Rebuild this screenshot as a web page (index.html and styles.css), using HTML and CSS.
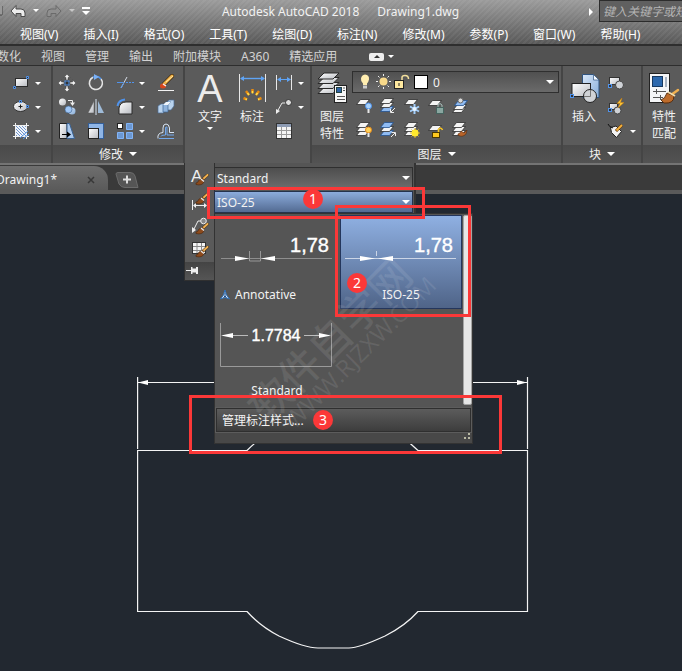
FILE: index.html
```html
<!DOCTYPE html>
<html lang="zh-CN">
<head>
    <meta charset="UTF-8">
    <meta name="viewport" content="width=device-width, initial-scale=1.0">
    <title>Autodesk AutoCAD 2018 - Drawing1.dwg</title>
    <link rel="stylesheet" href="styles.css">
</head>
<body>
    <!-- shared shapes -->
    <svg class="defs" width="0" height="0" aria-hidden="true">
        <defs>
            <linearGradient id="metal" x1="0" y1="0" x2="1" y2="1">
                <stop offset="0" stop-color="#ffffff"/>
                <stop offset="1" stop-color="#b9bcc2"/>
            </linearGradient>
            <linearGradient id="blue" x1="0" y1="0" x2="1" y2="1">
                <stop offset="0" stop-color="#d9e7f8"/>
                <stop offset="1" stop-color="#86add9"/>
            </linearGradient>
            <pattern id="hatch" width="3" height="3" patternUnits="userSpaceOnUse">
                <rect width="3" height="3" fill="#f2f5fa"/>
                <path d="M0 0L3 3" stroke="#6f94cc"/>
            </pattern>
            <symbol id="brush" viewBox="0 0 14 12">
                <path d="M7 6L12.500 1" stroke="#3a2a18" stroke-width="3" stroke-linecap="round"/>
                <path d="M7 6L12.500 1" stroke="#f0b050" stroke-width="2" stroke-linecap="round"/>
                <path d="M1 9Q3 9 4 6L8 4.500L9 8Q7 12 1 10.500Z" fill="#8c4a1c" stroke="#4a260c" stroke-width=".6"/>
                <path d="M6 5L9 7.500" stroke="#e8e8e8" stroke-width="1.400"/>
            </symbol>
            <symbol id="sheet" viewBox="0 0 14 6">
                <path d="M4.500 .5H13.500L9.500 5.500H.5Z" fill="#f4f4f4" stroke="#2c2c2c" stroke-width=".8"/>
            </symbol>
            <symbol id="sheet-blue" viewBox="0 0 14 6">
                <path d="M4.500 .5H13.500L9.500 5.500H.5Z" fill="#8fbbf2" stroke="#23508c" stroke-width=".8"/>
            </symbol>
        </defs>
    </svg>

    <header class="app-header">
        <div class="titlebar">
            <div class="quick-access">
                <svg width="92" height="24" viewBox="0 0 92 24">
                    <path d="M0 6V15H2V6" fill="#eee" stroke="#444"/>
                    <path d="M11 11L16 5.500V9H21Q25 9 25 13V16.500H21V13.500H16V16.500Z" fill="#ececec" stroke="#4a4a4a"/>
                    <path d="M33 9H39L36 12Z" fill="#fff"/>
                    <path d="M61 11L56 5.500V9H51Q47 9 47 13V16.500H51V13.500H56V16.500Z" fill="#8f8f8f" stroke="#6a6a6a"/>
                    <path d="M69 9H75L72 12Z" fill="#c8c8c8"/>
                    <path d="M82 7H90V9H82ZM82 11H90L86 15Z" fill="#fff"/>
                </svg>
            </div>
            <h1 class="title"><span>Autodesk AutoCAD 2018</span><span>Drawing1.dwg</span></h1>
            <span class="play"></span>
            <input class="search" type="text" placeholder="键入关键字或短语" aria-label="键入关键字或短语">
        </div>
        <nav class="menubar">
            <a href="#">视图(V)</a>
            <a href="#">插入(I)</a>
            <a href="#">格式(O)</a>
            <a href="#">工具(T)</a>
            <a href="#">绘图(D)</a>
            <a href="#">标注(N)</a>
            <a href="#">修改(M)</a>
            <a href="#">参数(P)</a>
            <a href="#">窗口(W)</a>
            <a href="#">帮助(H)</a>
        </nav>
    </header>

    <nav class="ribbon-tabs">
        <a href="#">参数化</a>
        <a href="#">视图</a>
        <a href="#">管理</a>
        <a href="#">输出</a>
        <a href="#">附加模块</a>
        <a href="#">A360</a>
        <a href="#">精选应用</a>
        <button class="minimize" aria-label="最小化"><i class="up"></i></button>
        <i class="caret"></i>
    </nav>

    <section class="ribbon">
        <div class="panel panel-draw">
            <div class="tools">
                <div class="tool-col">
                    <button class="tool"><svg viewBox="0 0 18 18"><rect x="3.500" y="4.500" width="12" height="8" fill="url(#metal)" stroke="#2b2b2b"/><path d="M14.500 2.500h2v2h-2zM1.500 12.500h2v2h-2z" fill="#333" stroke="#4f93ec"/></svg><i class="caret"></i></button>
                    <button class="tool"><svg viewBox="0 0 18 18"><ellipse cx="8.500" cy="8.500" rx="7" ry="5" fill="url(#metal)" stroke="#333"/><path d="M6.500 8.500h4M8.500 6.500v4" stroke="#222"/><path d="M7.500 2.500h2v2h-2zM14.500 7.500h2v2h-2z" fill="#333" stroke="#4f93ec"/></svg><i class="caret"></i></button>
                    <button class="tool"><svg viewBox="0 0 18 18"><rect x="4" y="4" width="10" height="10" fill="url(#hatch)"/><path d="M1 3.500H17M1 14.500H17M3.500 1V17M14.500 1V17" stroke="#f0f0f0"/><path d="M8 16L16 9M11 17L17 12" stroke="#4f93ec"/></svg><i class="caret"></i></button>
                </div>
            </div>
            <div class="panel-title"></div>
        </div>

        <div class="panel panel-modify">
            <div class="tools tool-grid">
                <button class="tool"><svg viewBox="0 0 18 18"><rect x="7" y="7" width="4" height="4" fill="#333" stroke="#4f93ec"/><path d="M9 0L12 3.500H10V6H8V3.500H6ZM9 18L12 14.500H10V12H8V14.500H6ZM0 9L3.500 6V8H6V10H3.500V12ZM18 9L14.500 6V8H12V10H14.500V12Z" fill="#f2f2f2" stroke="#333" stroke-width=".5"/></svg></button>
                <button class="tool"><svg viewBox="0 0 18 18"><path d="M6 3.200A6.500 6.500 0 1 0 14 5" fill="none" stroke="#e4e4e4" stroke-width="1.600"/><path d="M6 3.200A6.500 6.500 0 0 1 14 5" fill="none" stroke="#4f93ec" stroke-width="1.600"/><path d="M7 0L12 3L7 6Z" fill="#7db0f2"/></svg></button>
                <button class="tool"><svg viewBox="0 0 18 18"><path d="M1 8.500H7" stroke="#4f93ec"/><path d="M10 8.500H18" stroke="#4f93ec" stroke-dasharray="2 1"/><path d="M5 14L11 3" stroke="#d5dce6"/><path d="M5 14L8 8.500" stroke="#4f93ec"/></svg><i class="caret"></i></button>
                <button class="tool"><svg viewBox="0 0 18 18"><path d="M7 10L15 2" stroke="#3a2408" stroke-width="4" stroke-linecap="round"/><path d="M7 10L15 2" stroke="#f2b44a" stroke-width="3" stroke-linecap="round"/><path d="M9 8L16 2" stroke="#ffe6a8"/><ellipse cx="6" cy="12" rx="3" ry="2.500" fill="#d8451c"/><path d="M6 10L9 12" stroke="#eee" stroke-width="1.500"/><path d="M1 16.500H17" stroke="#f2f2f2"/></svg></button>

                <button class="tool"><svg viewBox="0 0 18 18"><circle cx="4.500" cy="4" r="3.500" fill="url(#metal)"/><circle cx="14" cy="13" r="3.500" fill="url(#blue)"/><circle cx="10.500" cy="11.500" r="3.500" fill="#9fc6f5" stroke="#3a5f8c" stroke-width=".6"/><path d="M10 2.500H14.500V5" fill="none" stroke="#eee"/><path d="M12 4.500H17L14.500 8Z" fill="#eee"/></svg></button>
                <button class="tool"><svg viewBox="0 0 18 18"><path d="M7 3V15H1Z" fill="url(#metal)" stroke="#555" stroke-width=".5"/><path d="M11 3V15H17Z" fill="#9fbbd8"/><path d="M9 1V17" stroke="#dce8f5"/></svg></button>
                <button class="tool"><svg viewBox="0 0 18 18"><path d="M3 16V10Q4 4 10 4H16V16Z" fill="url(#metal)" stroke="#2b2b2b"/><path d="M1.500 8Q2.500 2 9 1.500" fill="none" stroke="#4f93ec" stroke-width="2"/></svg><i class="caret"></i></button>
                <button class="tool"><svg viewBox="0 0 18 18"><path d="M1 8L4 6H8V13L6 15H1ZM9 5L12 2H17V8L14 12H9Z" fill="#b9d3ee" stroke="#4a6c94" stroke-width=".7"/><path d="M6 7L9 4H14L11 7V14H6Z" fill="#8fb3dc" stroke="#3e6594" stroke-width=".7"/><path d="M6 7L9 4H14L11 7Z" fill="#f0f5fb"/></svg></button>

                <button class="tool"><svg viewBox="0 0 18 18"><path d="M1.500 1.500H9V16.500H1.500Z" fill="url(#metal)" stroke="#222"/><path d="M9 1.500H11.500L16.500 16.500H9Z" fill="#aac8ec" stroke="#3b6292"/><path d="M4 12.500H11" stroke="#000"/><path d="M9 9.500L13 12.500L9 15.500Z" fill="#000"/></svg></button>
                <button class="tool"><svg viewBox="0 0 18 18"><rect x="1.500" y="1.500" width="15" height="15" fill="#8fb5e6" stroke="#355f98"/><rect x="1.500" y="6.500" width="10" height="10" fill="url(#metal)" stroke="#222"/></svg></button>
                <button class="tool"><svg viewBox="0 0 18 18"><rect x="1.500" y="1.500" width="5" height="5" fill="#fff" stroke="#222"/><path d="M10.500 1.500h6v6h-6zM1.500 10.500h6v6h-6zM10.500 10.500h6v6h-6z" fill="#6c98d2" stroke="#82b5f8"/></svg><i class="caret"></i></button>
                <button class="tool"><svg viewBox="0 0 18 18"><path d="M1 16.500Q0 11 6 10.500V6Q6 2 9 2Q12 2 12.500 6V10.500H17" fill="none" stroke="#d8e5f5"/><path d="M4 14.500Q3.500 13 8.500 13V6Q8.500 4.500 10 5V13H17M2 16.500H17" fill="none" stroke="#73a8ec"/></svg></button>
            </div>
            <div class="panel-title">修改<i class="caret caret-lg"></i></div>
        </div>

        <div class="panel panel-annotation">
            <div class="tools">
                <button class="tool-big"><span class="big-icon letter">A</span>文字<i class="caret"></i></button>
                <button class="tool-big">
                    <svg class="big-icon" viewBox="0 0 32 36"><path d="M3.500 2V30M29.500 2V30" stroke="#e8e8e8"/><path d="M5 6.500H28" stroke="#5fa4f5" stroke-width="1.400"/><path d="M4 6.500L8 4V9ZM29 6.500L25 4V9Z" fill="#5fa4f5"/><g stroke="#e88a10" stroke-width="2.500"><path d="M16.500 17V21M10 19L13 23M23 19L20 23M7.500 26L11 27.500M25.500 26L22 27.500"/></g><g stroke="#ffe14a" stroke-width="1.500"><path d="M16.500 19V21.500M11.500 21L13 23M21.500 21L20 23M9.500 27L11 27.500M23.500 27L22 27.500"/></g></svg>
                    标注
                </button>
                <div class="tool-col">
                    <button class="tool"><svg viewBox="0 0 18 18"><path d="M1.500 1V16M16.500 1V16" stroke="#e8e8e8"/><path d="M3 5.500H15" stroke="#5fa4f5"/><path d="M2 5.500L6 3V8ZM16 5.500L12 3V8Z" fill="#5fa4f5"/></svg><i class="caret"></i></button>
                    <button class="tool"><svg viewBox="0 0 18 18"><path d="M2 14L7 5H11" fill="none" stroke="#e8e8e8"/><path d="M1 16V11L5 13Z" fill="#eee"/><circle cx="13.500" cy="4.500" r="3" fill="#ddd" stroke="#333"/></svg><i class="caret"></i></button>
                    <button class="tool"><svg viewBox="0 0 18 18"><rect x="1.500" y="1.500" width="15" height="15" fill="#f4f4f4" stroke="#333"/><path d="M2 2H16V5H2Z" fill="#8d9bb3"/><path d="M2 8.500H16M2 12.500H16M6.500 5V16M11.500 5V16" stroke="#999"/></svg></button>
                </div>
            </div>

            <div class="flyout">
                <div class="style-icons">
                    <svg viewBox="0 0 18 18"><text x="0" y="13" class="icon-letter">A</text><use href="#brush" x="4" y="5" width="14" height="12"/></svg>
                    <svg viewBox="0 0 18 18"><path d="M1.500 7V17M16.500 7V17M3 12.500H15" stroke="#eee"/><path d="M2 12.500L5 10V15ZM16 12.500L13 10V15Z" fill="#eee"/><use href="#brush" x="4" y="0" width="14" height="12"/></svg>
                    <svg viewBox="0 0 18 18"><path d="M2 14L7 4H11" fill="none" stroke="#eee"/><path d="M1 16V10L5 13Z" fill="#eee"/><circle cx="12.500" cy="4" r="2.800" fill="#888" stroke="#eee"/><use href="#brush" x="4" y="6" width="14" height="12"/></svg>
                    <svg viewBox="0 0 18 18"><rect x="1.500" y="1.500" width="13" height="11" fill="#f4f4f4" stroke="#333"/><path d="M2 5.500H14M2 9.500H14M6 2V12M10.500 2V12" stroke="#888"/><use href="#brush" x="4" y="5" width="14" height="12"/></svg>
                    <button class="pin" aria-label="固定"><svg viewBox="0 0 18 18"><path d="M1 8.500H7" stroke="#eee"/><path d="M6 5V12H7.500V10.500H11V12H13V5H11V6.500H7.500V5Z" fill="#eee"/></svg></button>
                </div>
                <div class="style-combos">
                    <select class="combo" aria-label="文字样式"><option>Standard</option></select>
                    <select class="combo active" aria-label="标注样式"><option>ISO-25</option></select>
                </div>

                <div class="style-list">
                    <div class="gallery">
                        <button class="style-item annotative">
                            <svg class="preview" viewBox="0 2 118 70"><text x="111" y="38" text-anchor="end" class="dim-text">1,78</text><path d="M3 44.500H114" stroke="#8e8e8e"/><path d="M31.500 37V47H42.500V37" fill="none" stroke="#989898"/><path d="M17 42L31 44.500L17 47ZM57 42L43 44.500L57 47Z" fill="#fff"/></svg>
                            <span><svg class="anno" viewBox="0 0 10 10"><path d="M5 0L6.500 5L9.500 9L5 7.500L.5 9L3.500 5Z" fill="#e8f2ff" stroke="#2d6db5"/><path d="M5 3V6L3.500 7.500M5 6L6.500 7.500" stroke="#1d4f8c" fill="none"/></svg>Annotative</span>
                        </button>
                        <button class="style-item selected">
                            <svg class="preview" viewBox="0 2 118 70"><text x="111" y="38" text-anchor="end" class="dim-text">1,78</text><path d="M3 44.500H114" stroke="#cbd5e6"/><path d="M34.500 37V42" stroke="#cbd5e6"/><path d="M18 42L33 44.500L18 47ZM51 42L36 44.500L51 47Z" fill="#fff"/></svg>
                            <span>ISO-25</span>
                        </button>
                        <button class="style-item">
                            <svg class="preview" viewBox="0 2 118 70"><path d="M2.500 13V56.500H113.500V13" fill="none" stroke="#9a9a9a"/><path d="M5 25.500H30M86 25.500H111" stroke="#bbb"/><path d="M3 25.500L15 23V28ZM113 25.500L101 23V28Z" fill="#fff"/><text x="58" y="31" text-anchor="middle" class="dim-text dim-small">1.7784</text></svg>
                            <span>Standard</span>
                        </button>
                    </div>
                    <div class="scrollbar"></div>
                    <button class="manage">管理标注样式...</button>
                    <div class="grip"><svg width="12" height="8" viewBox="0 0 12 8"><path d="M8 0h2v2h-2zM4 4h2v2h-2zM8 4h2v2h-2z" fill="#b9b9a4"/></svg></div>
                </div>

                <div class="watermark"><b>软件自学网</b><span>WWW.RJZXW.COM</span></div>

                <div class="mark mark-combo"><span class="badge">1</span></div>
                <div class="mark mark-item"><span class="badge">2</span></div>
                <div class="mark mark-manage"><span class="badge">3</span></div>
            </div>
        </div>

        <div class="panel panel-layers">
            <div class="tools">
                <button class="tool-big">
                    <svg class="big-icon" viewBox="0 0 32 36"><g fill="url(#metal)" stroke="#292929"><path d="M8 15.500H23L17 21.500H2Z"/><path d="M8 10.500H23L17 16.500H2Z"/><path d="M8 5.500H23L17 11.500H2Z"/><path d="M8 1H23L17 7H2Z"/></g><rect x="18.500" y="13.500" width="12" height="17" fill="#f7f7f7" stroke="#222"/><rect x="20.500" y="15.500" width="5" height="5" fill="#2f62a5" stroke="#244"/><path d="M27 16H29M27 18.500H29M21 24.500H29M21 27.500H29" stroke="#555"/></svg>
                    图层<br>特性
                </button>
                <div class="layer-side">
                    <div class="combo layer-combo">
                        <svg width="56" height="18" viewBox="0 0 56 18"><path d="M7 1.500Q11.500 2 11 6.500Q10.500 9 9 10.500V12H5V10.500Q2.500 8 3 5.500Q3.500 2 7 1.500Z" fill="#ffedb0"/><path d="M5 12.500H9V15.500H5Z" fill="#ccc"/><circle cx="25.500" cy="8.500" r="4" fill="#f8d98a"/><path d="M25.500 1V3M25.500 14V16M18 8.500H20M31 8.500H33M20 3L21.500 4.500M31 3L29.500 4.500M20 14L21.500 12.500M31 14L29.500 12.500" stroke="#eee"/><rect x="36.500" y="7.500" width="9" height="8" fill="#ffe9a0" stroke="#222"/><path d="M44 7V4.500Q44 2.500 47 2.500Q50.500 2.500 50.500 6" fill="none" stroke="#f3df9c" stroke-width="1.500"/><path d="M41 10V13" stroke="#222"/></svg>
                        <svg class="swatch" viewBox="0 0 14 14"><rect x=".5" y=".5" width="13" height="13" fill="#fff" stroke="#000"/></svg>
                        <select aria-label="图层"><option>0</option></select>
                    </div>
                    <div class="layer-tools">
                        <button class="tool"><svg viewBox="0 0 18 18"><use href="#sheet" x="1" y="2" width="14" height="6"/><circle cx="13.500" cy="9" r="3" fill="#a9d2fb" stroke="#4f93ec"/><path d="M13.500 12V16" stroke="#e8e8e8" stroke-width="2"/></svg></button>
                        <button class="tool"><svg viewBox="0 0 18 18"><use href="#sheet-blue" x="1" y="9" width="14" height="6"/><use href="#sheet" x="1" y="5" width="14" height="6"/><use href="#sheet" x="1" y="1" width="14" height="6"/><path d="M16 11L12 15M11.500 12V15.500H15" fill="none" stroke="#eee"/></svg></button>
                        <button class="tool"><svg viewBox="0 0 18 18"><use href="#sheet" x="1" y="2" width="14" height="6"/><path d="M11.500 7V17M7 9.500L16 14.500M16 9.500L7 14.500" stroke="#a3cffd" stroke-width="2"/><circle cx="11.500" cy="12" r="2" fill="#eaf5ff"/></svg></button>
                        <button class="tool"><svg viewBox="0 0 18 18"><use href="#sheet" x="1" y="3" width="14" height="6"/><rect x="9.500" y="10.500" width="7" height="6" fill="#89a6a0" stroke="#45635e"/><path d="M11 10V8Q13 5 15 8V10" fill="none" stroke="#a8c0bb"/></svg></button>
                        <button class="tool"><svg viewBox="0 0 18 18"><use href="#sheet" x="1" y="10" width="14" height="6"/><use href="#sheet" x="2" y="7" width="14" height="6"/><use href="#sheet-blue" x="3" y="3" width="14" height="6"/><circle cx="9.500" cy="3.500" r="2.500" fill="#ddd" stroke="#666"/></svg></button>
                        <button class="tool"><svg viewBox="0 0 18 18"><use href="#sheet" x="1" y="9" width="14" height="6"/><use href="#sheet" x="1" y="5" width="14" height="6"/><use href="#sheet" x="1" y="1" width="14" height="6"/><circle cx="13.500" cy="9" r="3" fill="#ffd35a" stroke="#e58a1c"/><path d="M13.500 12V16" stroke="#e8e8e8" stroke-width="2"/></svg></button>
                        <button class="tool"><svg viewBox="0 0 18 18"><use href="#sheet-blue" x="1" y="9" width="14" height="6"/><use href="#sheet" x="1" y="5" width="14" height="6"/><use href="#sheet-blue" x="1" y="1" width="14" height="6"/><path d="M12 16L16 12M12.500 11.500H16.500V15" fill="none" stroke="#eee"/></svg></button>
                        <button class="tool"><svg viewBox="0 0 18 18"><use href="#sheet" x="1" y="9" width="14" height="6"/><use href="#sheet" x="1" y="5" width="14" height="6"/><use href="#sheet" x="1" y="1" width="14" height="6"/><path d="M12 7V17M7 12H17M8.500 8.500L15.500 15.500M15.500 8.500L8.500 15.500" stroke="#e5b82c"/><circle cx="12" cy="12" r="3.500" fill="#ffe92e"/></svg></button>
                        <button class="tool"><svg viewBox="0 0 18 18"><use href="#sheet" x="1" y="4" width="14" height="6"/><rect x="5.500" y="11.500" width="7" height="5" fill="#ffc91e" stroke="#4a3800"/><path d="M11.500 11V8.500Q14 5.500 15.500 9" fill="none" stroke="#ffc91e" stroke-width="1.500"/></svg></button>
                        <button class="tool"><svg viewBox="0 0 18 18"><use href="#sheet" x="1" y="9" width="14" height="6"/><use href="#sheet" x="1" y="5" width="14" height="6"/><use href="#sheet" x="1" y="1" width="14" height="6"/><path d="M7 13Q10 12 10 10L13 12L16 9L15 13Q11 17 7 14Z" fill="#b8642a" stroke="#5a2c0c" stroke-width=".6"/></svg></button>
                    </div>
                </div>
            </div>
            <div class="panel-title">图层<i class="caret caret-lg"></i></div>
        </div>

        <div class="panel panel-block">
            <div class="tools">
                <button class="tool-big">
                    <svg class="big-icon" viewBox="0 0 32 36"><path d="M14.500 2.500H25.500L31 8V25.500H14.500Z" fill="url(#blue)" stroke="#31547f"/><path d="M25.500 2.500V8H31Z" fill="#f5f9ff" stroke="#31547f" stroke-width=".7"/><rect x="4" y="11.500" width="18.500" height="13" fill="url(#metal)" stroke="#222"/><circle cx="22" cy="24" r="6.500" fill="#d0d3d7" stroke="#222"/><path d="M22.500 18V24.500H16" fill="none" stroke="#777"/><rect x="2.500" y="22.500" width="3" height="3" fill="#333" stroke="#4f93ec"/></svg>
                    插入
                </button>
                <div class="tool-col">
                    <button class="tool"><svg viewBox="0 0 18 18"><rect x="2.500" y="3.500" width="10" height="7" fill="url(#metal)" stroke="#333"/><circle cx="12.500" cy="11" r="4" fill="#cfd2d6" stroke="#444"/><rect x="1.500" y="10.500" width="3" height="3" fill="#333" stroke="#4f93ec"/></svg></button>
                    <button class="tool"><svg viewBox="0 0 18 18"><rect x="2.500" y="5.500" width="8" height="6" fill="url(#metal)" stroke="#333"/><circle cx="10.500" cy="12.500" r="3.500" fill="#cfd2d6" stroke="#444"/><rect x="1.500" y="10.500" width="3" height="3" fill="#333" stroke="#4f93ec"/><path d="M15 0L10 5.500H13L11 10L17 4.500H13.500Z" fill="#ffc93a" stroke="#c97c0c" stroke-width=".5"/></svg></button>
                    <button class="tool"><svg viewBox="0 0 18 18"><path d="M3.500 5.500L9 4L14.500 9.500L9.500 15.500L4.500 10.500Z" fill="#f2f2f2" stroke="#222"/><path d="M1 2Q2 5 6 6" fill="none" stroke="#111"/><path d="M9 9L15 3" stroke="#5a3208" stroke-width="3"/><path d="M9.500 8.500L15 3" stroke="#f5b13c" stroke-width="2"/></svg><i class="caret"></i></button>
                </div>
            </div>
            <div class="panel-title">块<i class="caret caret-lg"></i></div>
        </div>

        <div class="panel panel-props">
            <div class="tools">
                <button class="tool-big">
                    <svg class="big-icon" viewBox="0 0 32 36"><rect x="1.500" y="1.500" width="20" height="29" fill="#f4f5f7" stroke="#222"/><rect x="4.500" y="4.500" width="10" height="10" fill="#2c68ad" stroke="#16385f"/><path d="M17 5H19V15H17Z" fill="#a7b2c0"/><path d="M5 19.500H18M5 25.500H15M8.500 17V22M12.500 23V28" stroke="#555"/><path d="M23 23L30 18" stroke="#f0b050" stroke-width="2.500" stroke-linecap="round"/><path d="M13 28Q17 27 19 21L26 24Q26 32 16 31Z" fill="#bd6c2c" stroke="#5b2e0c"/><path d="M20 20L27 24" stroke="#f3dca8" stroke-width="2"/></svg>
                    特性<br>匹配
                </button>
            </div>
            <div class="panel-title"></div>
        </div>
    </section>

    <div class="file-tabs">
        <a href="#" class="file-tab">Drawing1*<svg width="8" height="8" viewBox="0 0 8 8"><path d="M1 1L7 7M7 1L1 7" stroke="#383838" stroke-width="1.500"/></svg></a>
        <button class="new-tab" aria-label="新图形"><svg width="24" height="16" viewBox="0 0 24 16"><path d="M1 2Q1 .5 3 .5H15Q19 .5 20 4L23 15.500H10Q6 15.500 4 12Z" fill="#555" stroke="#6b6b6b"/><path d="M8 7.500H16M12 3.500V11.500" stroke="#ddd" stroke-width="2"/></svg></button>
    </div>

    <main class="canvas">
        <svg class="drawing" width="392" height="274" viewBox="0 0 392 274">
            <g fill="none" stroke="#f4f4f4" stroke-width="1.200">
                <path d="M.6 0V72M390.500 0V72M0 5.500H391"/>
                <path d="M.6 73.500H110C160 24 231 24 281 73.500H390.500V234.500H281Q268 249 248 259Q222 271 212 271H181Q168 271 142 259Q123 249 110 234.500H.6Z"/>
            </g>
            <path d="M1 5.500L11 3V8ZM390 5.500L380 3V8Z" fill="#fff"/>
        </svg>
    </main>
</body>
</html>
```
FILE: styles.css
```css
* {
    margin: 0;
    padding: 0;
    box-sizing: border-box;
}

body {
    min-height: 100vh;
    display: flex;
    flex-direction: column;
    overflow-x: hidden;
    background: #222830;
    color: #f2f2f2;
    font-family: "Noto Sans", "Noto Sans CJK SC", sans-serif;
    font-size: 12px;
    line-height: 17px;
}

a {
    color: inherit;
    text-decoration: none;
}

button,
select,
input {
    font: inherit;
    color: inherit;
    background: none;
    border: none;
}

.defs {
    position: absolute;
}

/* drop-down arrows */
.caret {
    flex: none;
    width: 0;
    height: 0;
    border: 3px solid transparent;
    border-top-color: #fff;
    border-bottom: none;
}

.caret-lg {
    border-width: 4px;
    border-bottom: none;
}

/* title + menu */
.app-header {
    background:
        repeating-linear-gradient(135deg, rgba(255, 255, 255, 0.05) 0 2px, transparent 2px 4px),
        linear-gradient(#9b9b9b, #585858);
    border-bottom: 2px solid #2e2e2e;
}

.titlebar {
    display: flex;
    height: 24px;
}

.quick-access {
    flex: none;
    width: 92px;
}

.title {
    flex: 1;
    display: flex;
    justify-content: center;
    gap: 18px;
    font-size: 12px;
    font-weight: normal;
    line-height: 24px;
    white-space: nowrap;
}

.play {
    flex: none;
    align-self: center;
    margin-right: 6px;
    border: 4px solid transparent;
    border-left-color: #fff;
    border-right: none;
}

.search {
    flex: none;
    width: 83px;
    height: 22px;
    padding-left: 3px;
    background: #606060;
    border: 1px solid #2c2c2c;
    border-right: none;
    font-style: italic;
}

.search::placeholder {
    color: #b4b4b4;
    opacity: 1;
}

.menubar {
    display: flex;
    gap: 25px;
    height: 20px;
    padding-left: 20px;
    line-height: 22px;
    white-space: nowrap;
    color: #fff;
}

.ribbon-tabs {
    display: flex;
    align-items: center;
    gap: 20px;
    height: 20px;
    margin-left: -15px;
    padding-top: 2px;
    background: #525252;
    border-bottom: 1px solid #2e2e2e;
    color: #d2d2d2;
    white-space: nowrap;
}

.minimize {
    display: flex;
    align-items: center;
    justify-content: center;
    width: 15px;
    height: 8px;
    margin-left: 12px;
    background: #eee;
    border-radius: 2px;
}

.minimize .up {
    border: 3px solid transparent;
    border-bottom-color: #333;
    border-top: none;
}

.minimize + .caret {
    margin-left: -16px;
}

/* ribbon */
.ribbon {
    display: flex;
    height: 97px;
    background: #5b5b5b;
}

.panel {
    position: relative;
    flex: none;
    display: flex;
    flex-direction: column;
    border-right: 2px solid #454545;
}

.panel-draw { width: 53px; }
.panel-modify { width: 132px; }
.panel-annotation { width: 127px; }
.panel-layers { width: 251px; }
.panel-block { width: 80px; }
.panel-props {
    flex: 1;
    border-right: none;
}

.tools {
    flex: 1;
    display: flex;
    align-items: flex-start;
}

.panel-title {
    display: flex;
    align-items: center;
    justify-content: center;
    gap: 6px;
    height: 18px;
    background: linear-gradient(#4a4a4a, #535353);
}

.tool-col {
    display: flex;
    flex-direction: column;
    gap: 6px;
    padding-top: 8px;
}

.tool {
    display: flex;
    align-items: center;
    gap: 5px;
    height: 18px;
}

.tool svg {
    width: 18px;
    height: 18px;
}

.panel-draw .tool-col {
    padding-left: 12px;
}

.tool-grid {
    display: grid;
    grid-template-columns: 29px 29px 41px 18px;
    grid-auto-rows: 18px;
    row-gap: 6px;
    padding: 8px 0 0 5px;
}

.tool-big {
    display: block;
    width: 42px;
    padding-top: 6px;
    text-align: center;
}

.big-icon {
    display: block;
    width: 32px;
    height: 36px;
    margin: 0 auto;
}

.letter {
    font-family: "Liberation Sans", sans-serif;
    font-size: 38px;
    line-height: 34px;
    color: #ececec;
}

.tool-big .caret {
    display: block;
    margin: 2px auto 0;
}

.panel-annotation .tools {
    padding-left: 4px;
}

.panel-annotation .tool-col {
    padding-left: 2px;
}

.panel-layers .tool-big {
    width: 40px;
}

.panel-block .tool-col {
    padding-left: 2px;
}

.layer-side {
    flex: 1;
    padding: 5px 2px 0 0;
}

.layer-tools {
    display: grid;
    grid-template-columns: repeat(5, 24px);
    row-gap: 6px;
    padding: 4px 0 0 3px;
}

.combo {
    display: block;
    width: 100%;
    height: 22px;
    padding: 0 20px 0 2px;
    border: 1px solid #2f2f2f;
    background: linear-gradient(#505050, #6a6a6a);
}

select {
    appearance: none;
}

.layer-combo {
    display: flex;
    align-items: center;
    padding: 0 5px;
    position: relative;
}

.layer-combo select {
    flex: 1;
    padding-left: 5px;
}

.swatch {
    flex: none;
    width: 14px;
    height: 14px;
}

.layer-combo::after,
.style-combos::before,
.style-combos::after {
    content: "";
    position: absolute;
    right: 4px;
    top: 8px;
    border: 4px solid transparent;
    border-top-color: #fff;
    border-bottom: none;
    pointer-events: none;
}

/* annotation flyout */
.flyout {
    position: absolute;
    z-index: 5;
    top: 97px;
    left: -1px;
    width: 232px;
    height: 50px;
    background: #555;
    border-right: 2px solid #333;
}

.style-icons {
    position: absolute;
    top: 0;
    left: 0;
    width: 31px;
    display: flex;
    flex-direction: column;
    align-items: center;
    gap: 6px;
    padding-top: 6px;
    background: #5a5a5a;
    border: 1px solid #303030;
    border-top: none;
}

.style-icons svg {
    width: 18px;
    height: 18px;
    overflow: visible;
}

.icon-letter {
    font: 17px "Liberation Sans", sans-serif;
    fill: #eee;
}

.pin {
    align-self: stretch;
    height: 18px;
    margin-top: -3px;
    background: linear-gradient(#444, #555);
    text-align: left;
}

.style-combos {
    position: relative;
    display: flex;
    flex-direction: column;
    gap: 2px;
    margin-left: 30px;
    padding: 4px 1px 0 0;
}

.style-combos .combo {
    background: linear-gradient(#4e4e4e, #6c6c6c);
}

.style-combos .combo.active {
    background: linear-gradient(#8cacdc, #536b92);
    border-color: #25334d;
}

.style-combos::before { top: 13px; }
.style-combos::after { top: 37px; }

.style-list {
    position: absolute;
    top: 50px;
    left: 30px;
    width: 259px;
    display: grid;
    grid-template-columns: 1fr 9px;
    background: #555;
    border: 1px solid #333;
}

.gallery {
    display: grid;
    grid-template-columns: 122px 122px;
    column-gap: 2px;
    row-gap: 2px;
    padding: 1px 0 1px 1px;
}

.style-item {
    display: flex;
    flex-direction: column;
    align-items: center;
    height: 94px;
    border: 1px solid transparent;
}

.style-item.annotative span {
    align-self: flex-start;
    padding-left: 3px;
}

.style-item.selected {
    background: linear-gradient(#8fb0e2, #4f6488);
    border-color: #24365c;
}

.preview {
    width: 118px;
    height: 70px;
}

.dim-text {
    font: 20px "Liberation Sans", sans-serif;
    fill: #fff;
    stroke: #fff;
    stroke-width: 0.4px;
}

.dim-small {
    font-size: 16px;
}

.anno {
    width: 10px;
    height: 10px;
    margin-right: 5px;
    vertical-align: -1px;
}

.scrollbar {
    margin: 1px 0;
    background: #e6e6e6;
    border: 1px solid #a5a5a5;
    border-radius: 2px;
}

.manage {
    grid-column: 1 / -1;
    height: 24px;
    margin: 2px 1px 1px;
    padding-left: 5px;
    border: 1px solid #2f2f2f;
    outline: 1px solid #5c5c5c;
    background: linear-gradient(#5c5c5c, #3d3d3d);
    text-align: left;
}

.grip {
    grid-column: 1 / -1;
    height: 10px;
    background: #484848;
    line-height: 0;
    text-align: right;
}

.watermark {
    position: absolute;
    top: 142px;
    left: 42px;
    display: flex;
    flex-direction: column;
    width: 240px;
    color: rgba(255, 255, 255, 0.09);
    transform: rotate(-45deg);
    pointer-events: none;
    white-space: nowrap;
}

.watermark b {
    font-size: 42px;
    font-weight: 500;
    line-height: 44px;
}

.watermark span {
    padding-left: 16px;
    font-size: 24px;
    line-height: 16px;
}

/* step markers */
.mark {
    position: absolute;
    border: 3px solid #fb3838;
    pointer-events: none;
}

.mark-combo {
    top: 24px;
    left: 23px;
    width: 218px;
    height: 32px;
}

.mark-item {
    top: 42px;
    left: 151px;
    width: 136px;
    height: 112px;
}

.mark-manage {
    top: 232px;
    left: 5px;
    width: 313px;
    height: 59px;
}

.badge {
    position: absolute;
    width: 20px;
    height: 20px;
    border-radius: 50%;
    background: #fb3838;
    color: #fff;
    font-size: 14px;
    line-height: 20px;
    text-align: center;
}

.mark-combo .badge { top: -1px; left: 93px; }
.mark-item .badge { top: 65px; left: 9px; }
.mark-manage .badge { top: 12px; left: 121px; }

/* document tabs */
.file-tabs {
    display: flex;
    align-items: flex-end;
    height: 31px;
    background: #3a3a3a;
    border-top: 2px solid #747474;
    border-bottom: 4px solid #5a5a5a;
}

.file-tab {
    display: flex;
    align-items: center;
    justify-content: space-between;
    width: 112px;
    height: 24px;
    margin-left: -4px;
    padding: 3px 13px 0 0;
    border-radius: 0 14px 0 0;
    background: linear-gradient(#6e6e6e, #5a5a5a);
}

.new-tab {
    height: 16px;
    margin: 0 0 2px 7px;
    line-height: 0;
}

.canvas {
    flex: 1;
    padding: 183px 0 0 137px;
}

.drawing {
    display: block;
}
```
